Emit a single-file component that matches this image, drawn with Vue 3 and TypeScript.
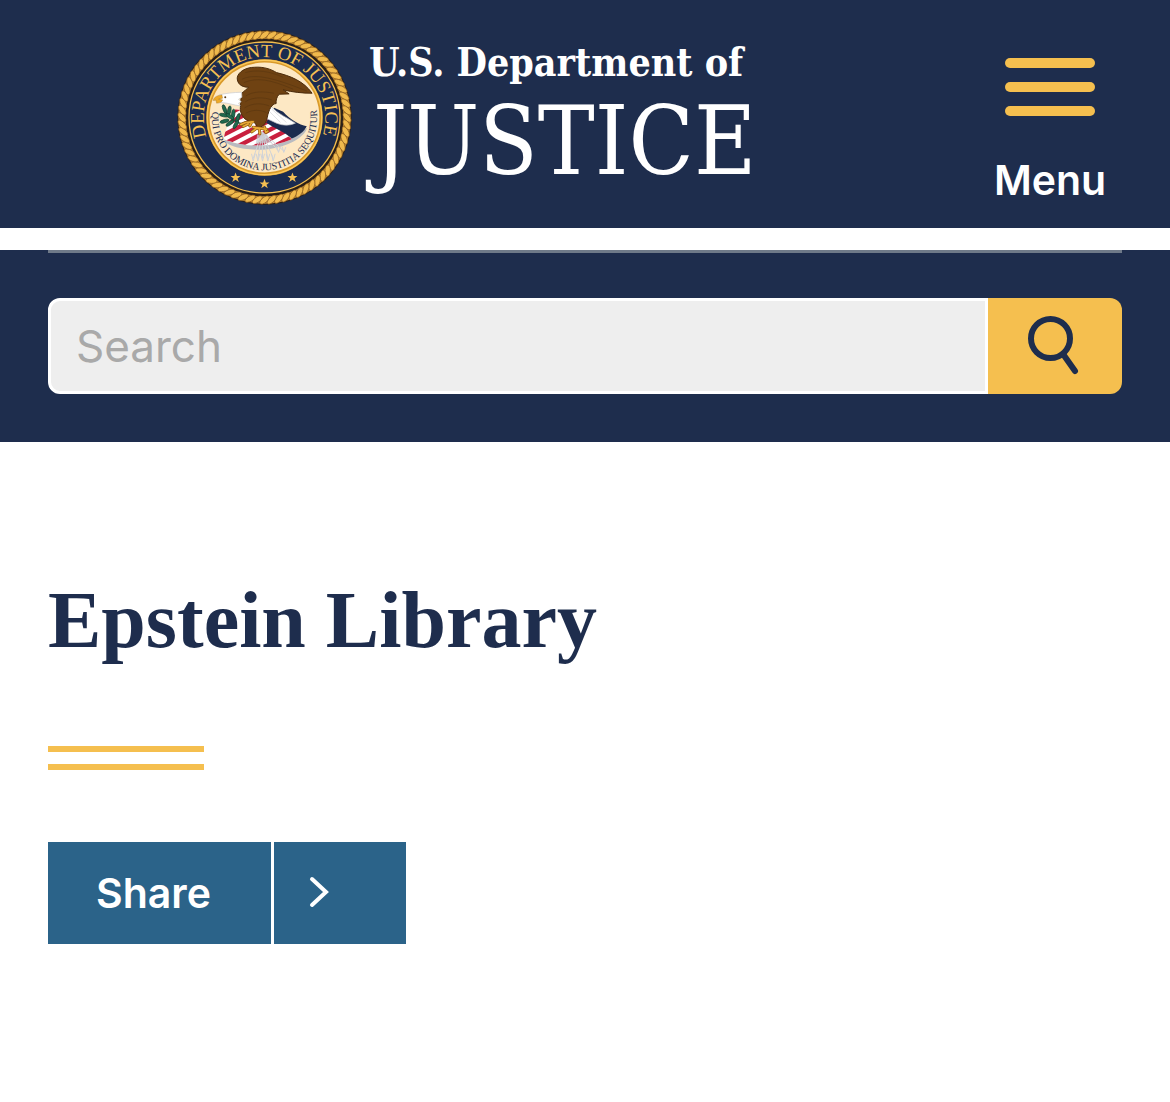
<script setup lang="ts">
import { ref } from 'vue'

const query = ref('')
const menuOpen = ref(false)
const shareOpen = ref(false)

const strands: number[] = Array.from({ length: 72 }, (_, i) => i * 5)
const stripes: number[] = [0, 1, 2, 3, 4, 5, 6, 7]
const arrows: number[] = [250, 264, 278, 294, 310, 326, 342]
const leaves = [
  { x: 164, y: 262, a: 70 },
  { x: 178, y: 266, a: 100 },
  { x: 162, y: 280, a: 10 },
  { x: 190, y: 276, a: 95 },
  { x: 164, y: 298, a: -15 },
  { x: 204, y: 288, a: 110 },
  { x: 180, y: 304, a: -35 },
  { x: 198, y: 308, a: -60 },
  { x: 180, y: 284, a: 35 },
]
const stars = [
  { x: 197, y: 468 },
  { x: 284, y: 487 },
  { x: 368, y: 468 },
]
</script>

<template>
  <header class="masthead">
    <a class="brand" href="#" aria-label="U.S. Department of Justice home">
      <svg class="seal" viewBox="21 24 526 526" aria-hidden="true">
        <defs>
          <path id="arc-top" d="M110 345A183 183 0 1 1 458 345" />
          <path id="arc-bottom" d="M127 270A158 158 0 1 0 441 270" />
          <clipPath id="shield">
            <path d="M196 262L240 268L300 290L366 352C300 380 220 376 163 352C160 330 182 300 196 262Z" />
          </clipPath>
        </defs>
        <circle cx="284" cy="287" r="262" fill="#2b2018" />
        <circle cx="284" cy="287" r="248" fill="none" stroke="#c08a32" stroke-width="22" />
        <g v-for="a in strands" :key="a" :transform="`rotate(${a} 284 287)`">
          <ellipse cx="284" cy="39" rx="17" ry="8" fill="#f0b94c" stroke="#8a5b1f" stroke-width="2" transform="rotate(-38 284 39)" />
        </g>
        <circle cx="284" cy="287" r="234" fill="#2b2018" />
        <circle cx="284" cy="287" r="227" fill="#1b2b4f" stroke="#f3bd4e" stroke-width="4" />
        <circle cx="284" cy="287" r="170" fill="#fde8c4" stroke="#d99a2b" stroke-width="10" />
        <circle cx="284" cy="287" r="172" fill="none" stroke="#fbc95c" stroke-width="4" />

        <path d="M163 352C165 372 220 384 275 384C340 382 405 350 412 318C385 342 350 358 300 366C240 372 190 366 163 352Z" fill="#b9bbc0" />
        <g clip-path="url(#shield)">
          <rect x="150" y="250" width="230" height="140" fill="#fff" />
          <path
            v-for="n in stripes"
            :key="n"
            :d="`M140 ${266 + n * 28}L390 ${138 + n * 28}`"
            stroke="#c91f3e"
            stroke-width="13"
          />
        </g>
        <path d="M313 258L340 270C360 292 388 310 411 313C404 328 386 342 366 350C345 332 312 318 289 303Z" fill="#1b2b4f" />
        <path d="M298 244C314 272 344 282 377 304C360 312 340 312 320 304L290 290Z" fill="#fff" stroke="#b6b8bd" stroke-width="2" />
        <path d="M306 262L350 302M300 270L332 302" stroke="#d3d4d8" stroke-width="2" />

        <path d="M160 258C176 288 195 302 222 308" fill="none" stroke="#1c5a43" stroke-width="4" />
        <ellipse
          v-for="l in leaves"
          :key="`${l.x}-${l.y}`"
          :cx="l.x"
          :cy="l.y"
          rx="14"
          ry="5"
          fill="#216a4d"
          stroke="#123f31"
          stroke-width="2"
          :transform="`rotate(${l.a} ${l.x} ${l.y})`"
        />

        <path
          d="M212 252L214 216C222 207 232 202 236 196C215 196 202 186 202 168C204 150 228 136 254 136C282 134 304 142 320 152C362 162 402 178 427 214C398 214 370 211 340 204L358 216L328 217C320 226 318 236 319 245C306 246 297 262 292 288C288 308 276 318 264 316L252 300L242 300L226 292C212 278 210 266 212 252Z"
          fill="#6f4212"
          stroke="#4b2b0b"
          stroke-width="3"
        />
        <path
          d="M216 172C250 156 300 162 412 208M222 182C262 166 300 172 370 202M226 152C260 142 300 148 340 166M228 222C250 208 280 208 312 214M226 240C250 224 282 226 306 234M224 258C250 242 276 244 298 252M228 274C250 262 272 264 290 272"
          fill="none"
          stroke="#5a360f"
          stroke-width="2"
        />
        <path d="M215 211C190 212 164 214 147 220L152 242C172 242 192 250 211 252L206 244L214 240L206 232L216 226Z" fill="#fff" stroke="#c7c9ce" stroke-width="2" />
        <path d="M156 219C140 220 130 228 130 236L138 235L140 244C150 244 158 240 158 234L146 232L158 229Z" fill="#eda928" stroke="#93641a" stroke-width="1" />
        <circle cx="166" cy="226" r="3" fill="#5a3a10" />

        <g stroke="#d0d3d8" stroke-width="3" fill="none">
          <path v-for="x in arrows" :key="x" :d="`M277 330L${x} ${x > 320 ? 388 : 410}`" />
          <path
            v-for="x in arrows"
            :key="`h${x}`"
            :d="`M${x - 5} ${x > 320 ? 374 : 396}L${x} ${x > 320 ? 392 : 418}L${x + 6} ${x > 320 ? 376 : 396}`"
          />
        </g>
        <path d="M262 338L290 336L306 362L258 366Z" fill="#c6c9ce" opacity="0.7" />

        <g fill="none" stroke-linecap="round" stroke-linejoin="round">
          <path d="M213 308L228 302L250 300M220 314L236 306M240 312L246 300M246 330L262 318L290 322M250 316L268 320L270 336M284 316L288 332L294 328" stroke="#8a5a12" stroke-width="9" />
          <path d="M213 308L228 302L250 300M220 314L236 306M240 312L246 300M246 330L262 318L290 322M250 316L268 320L270 336M284 316L288 332L294 328" stroke="#e9aa35" stroke-width="5" />
        </g>

        <text class="seal-title"><textPath href="#arc-top">DEPARTMENT OF JUSTICE</textPath></text>
        <text class="seal-motto"><textPath href="#arc-bottom">QUI PRO DOMINA JUSTITIA SEQUITUR</textPath></text>
        <path
          v-for="s in stars"
          :key="s.x"
          d="M0 -16L4 -5L15 -5L6 2L10 13L0 6L-10 13L-6 2L-15 -5L-4 -5Z"
          fill="#f6c052"
          :transform="`translate(${s.x} ${s.y})`"
        />
      </svg>
      <span class="wordmark">
        <span class="agency">U.S. Department of</span>
        <span class="justice">JUSTICE</span>
      </span>
    </a>
    <button class="menu" type="button" :aria-expanded="menuOpen" @click="menuOpen = !menuOpen">
      <span class="bars" aria-hidden="true"><i></i><i></i><i></i></span>
      <span>Menu</span>
    </button>
  </header>

  <section class="search-band">
    <form class="search" role="search" @submit.prevent>
      <input v-model="query" type="search" placeholder="Search" aria-label="Search" />
      <button type="submit" aria-label="Submit search">
        <svg viewBox="0 0 54 60" width="54" height="60" fill="none" stroke="#1e2d4d" stroke-width="6" aria-hidden="true">
          <circle cx="22.5" cy="22.5" r="19.5" />
          <path d="M35 38L47 55" stroke-linecap="round" />
        </svg>
      </button>
    </form>
  </section>

  <main class="content">
    <h1>Epstein Library</h1>
    <div class="rule" aria-hidden="true"></div>
    <button class="share" type="button" :aria-expanded="shareOpen" @click="shareOpen = !shareOpen">
      <span class="share-label">Share</span>
      <span class="share-arrow">
        <svg viewBox="0 0 20 34" width="20" height="34" fill="none" stroke="#fff" stroke-width="4" stroke-linecap="round" aria-hidden="true">
          <path d="M3 3L17 16L3 29" />
        </svg>
      </span>
    </button>
  </main>
</template>

<style>
body {
  margin: 0;
  background: #fff;
}
</style>

<style scoped>
* {
  box-sizing: border-box;
}

.masthead,
.search-band,
.content {
  font-family: Inter, 'Liberation Sans', sans-serif;
}

.masthead {
  display: flex;
  justify-content: space-between;
  align-items: flex-start;
  min-height: 228px;
  padding: 30px 48px 0 177px;
  background: #1e2d4d;
}

.brand {
  display: flex;
  gap: 17px;
  color: #fff;
  text-decoration: none;
}

.seal {
  flex: none;
  width: 175px;
  height: 175px;
}

.seal-title {
  font: 56px 'Liberation Serif', serif;
  fill: #f6c052;
}

.seal-motto {
  font: 30px 'Liberation Serif', serif;
  fill: #1b2b4f;
}

.wordmark {
  display: flex;
  flex-direction: column;
  padding-top: 8px;
  font-family: 'DejaVu Serif Condensed', 'DejaVu Serif', serif;
  font-stretch: condensed;
  white-space: nowrap;
}

.agency {
  font-size: 39px;
  font-weight: 700;
  line-height: 48px;
}

.justice {
  padding-left: 4px;
  font-size: 95px;
  line-height: 110px;
}

.menu {
  display: flex;
  flex-direction: column;
  align-items: center;
  gap: 36px;
  width: 144px;
  padding: 28px 0 0;
  border: 0;
  background: none;
  color: #fff;
  font: 600 41px/56px Inter, sans-serif;
  cursor: pointer;
}

.bars {
  display: flex;
  flex-direction: column;
  gap: 14px;
  width: 90px;
}

.bars i {
  height: 10px;
  border-radius: 5px;
  background: #f5bf4f;
}

.search-band {
  margin-top: 22px;
  padding: 0 48px 48px;
  background: #1e2d4d;
}

.search {
  display: flex;
  padding-top: 45px;
  border-top: 3px solid #6f7a89;
}

.search input {
  flex: 1;
  min-width: 0;
  height: 96px;
  padding: 0 25px;
  border: 3px solid #fff;
  border-radius: 12px 0 0 12px;
  background: #eee;
  color: #1e2d4d;
  font: 44px Inter, sans-serif;
  appearance: none;
}

.search input::placeholder {
  color: #a9a9a9;
  opacity: 1;
}

.search button {
  display: flex;
  align-items: center;
  justify-content: center;
  width: 134px;
  padding: 0;
  border: 0;
  border-radius: 0 12px 12px 0;
  background: #f5bf4f;
  cursor: pointer;
}

.content {
  padding: 130px 48px 48px;
}

h1 {
  margin: 0;
  color: #1e2d4d;
  font: 700 80px/96px 'Liberation Serif', serif;
}

.rule {
  width: 156px;
  height: 24px;
  margin: 78px 0 72px;
  border-top: 6px solid #f5bf4f;
  border-bottom: 6px solid #f5bf4f;
}

.share {
  display: flex;
  padding: 0;
  border: 0;
  background: #2b6389;
  color: #fff;
  font: 600 41px/102px Inter, sans-serif;
  cursor: pointer;
}

.share-label {
  width: 226px;
  padding-left: 48px;
  border-right: 3px solid #fff;
  text-align: left;
}

.share-arrow {
  display: flex;
  align-items: center;
  width: 132px;
  padding-left: 35px;
}
</style>
